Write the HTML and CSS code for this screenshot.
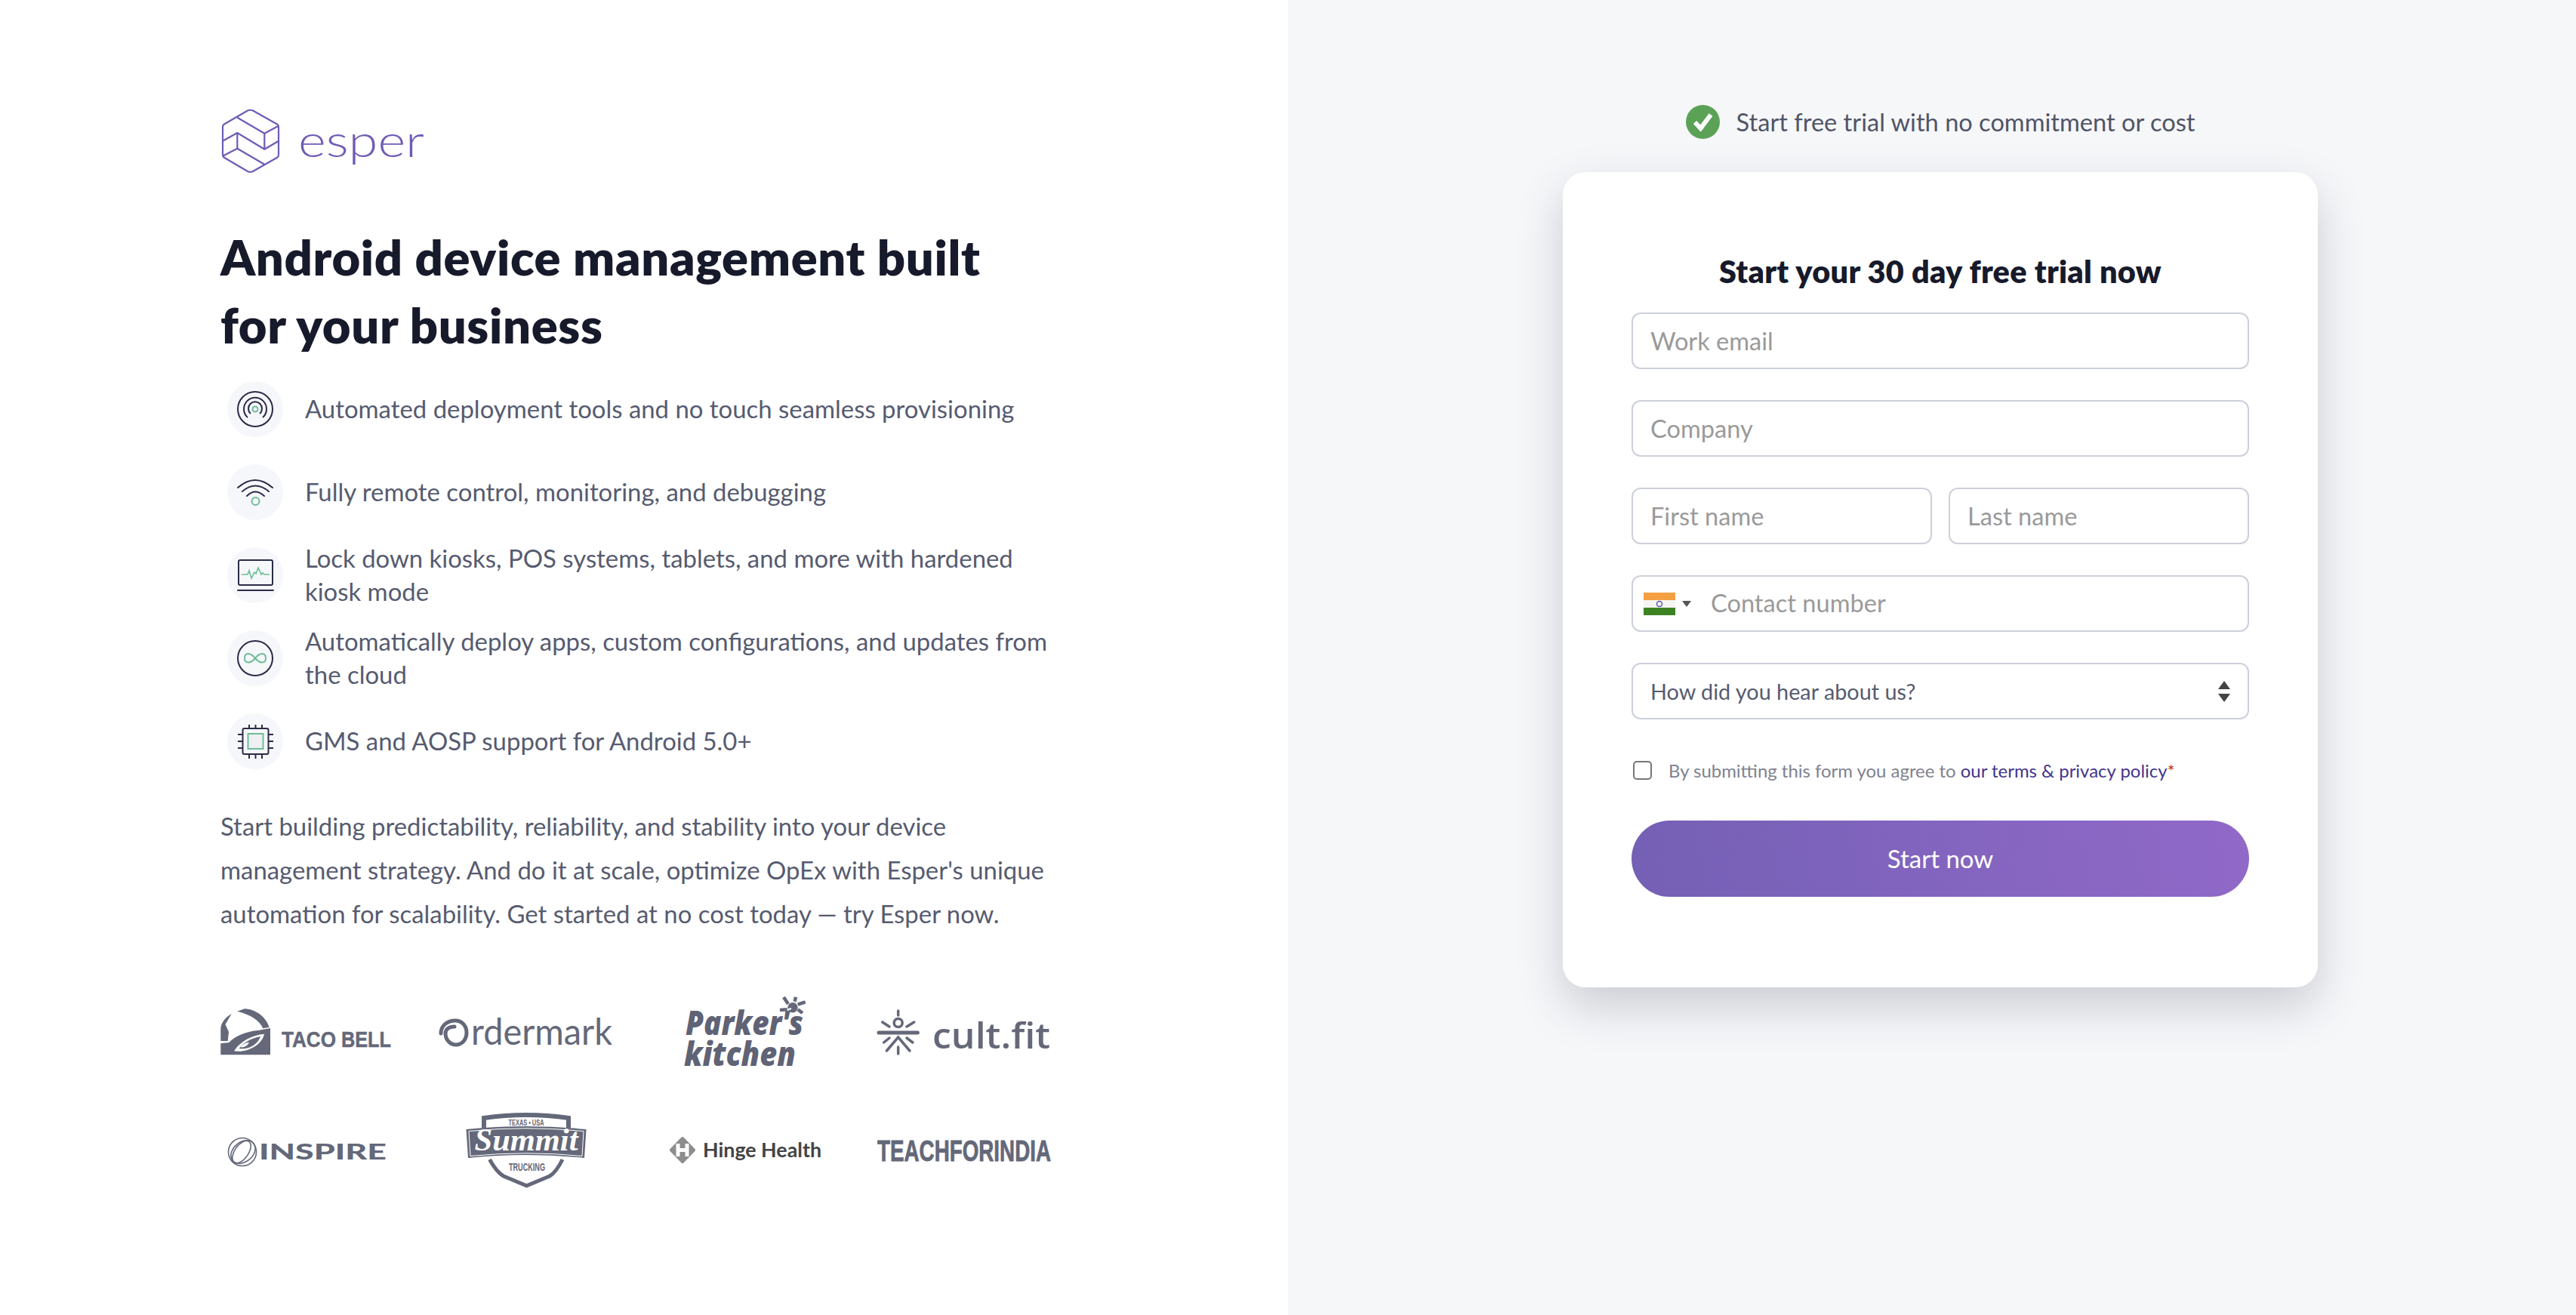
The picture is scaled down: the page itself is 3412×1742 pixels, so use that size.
FILE: index.html
```html
<!DOCTYPE html>
<html lang="en">
<head>
    <meta charset="UTF-8">
    <title>Esper - Start your free trial</title>
    <link rel="stylesheet" href="styles.css">
</head>
<body>
    <div class="page">
        <section class="intro">
            <svg class="logo" width="280" height="86" viewBox="0 0 280 86">
                <g fill="none" stroke="#6f5bb5" stroke-width="2.2" stroke-linejoin="round">
                    <path d="M36 1.500 Q39.700 0 43 1.500 L75 19.500 Q77 20.700 77 23 V60 Q77 62.500 75 63.700 L43 82 Q39.700 83.500 36 82 L5 63.700 Q3 62.500 3 60 V23 Q3 20.700 5 19.500 Z"/>
                    <path d="M22.300 10.700 L58.300 31.700 L77 21.700"/>
                    <path d="M58.300 31.700 V52.700"/>
                    <path d="M3 41.700 L22.300 31 L58.300 52.700 L77 41.700"/>
                    <path d="M22.300 31 V51.700"/>
                    <path d="M3 61.700 L22.300 51.700 L58.300 72.700"/>
                </g>
                <text class="logo-word" x="103" y="63" textLength="167" lengthAdjust="spacingAndGlyphs">esper</text>
            </svg>
            <h1>Android device management built<br>for your business</h1>
            <ul class="features">
                <li>
                    <span class="feature-icon">
                        <svg width="74" height="74" viewBox="0 0 74 74" fill="none" stroke="#2b2b48" stroke-width="2">
                            <circle cx="37" cy="37" r="23"/>
                            <path d="M27 48 A15 15 0 1 1 47 48"/>
                            <path d="M31 43 A9 9 0 1 1 43 43"/>
                            <circle cx="37" cy="37" r="3.500" stroke="#6dbd95"/>
                        </svg>
                    </span>
                    <p>Automated deployment tools and no touch seamless provisioning</p>
                </li>
                <li>
                    <span class="feature-icon">
                        <svg width="74" height="74" viewBox="0 0 74 74" fill="none" stroke="#2b2b48" stroke-width="2" stroke-linecap="round">
                            <path d="M14 31 Q37 11 60 31"/>
                            <path d="M20 36 Q37 21 55 36"/>
                            <path d="M26 42 Q37 31 49 42"/>
                            <circle cx="37.500" cy="49" r="5" stroke="#6dbd95"/>
                        </svg>
                    </span>
                    <p>Fully remote control, monitoring, and debugging</p>
                </li>
                <li>
                    <span class="feature-icon">
                        <svg width="74" height="74" viewBox="0 0 74 74" fill="none" stroke="#2b2b48" stroke-width="2">
                            <rect x="15" y="17" width="45" height="33" rx="2"/>
                            <path d="M14 57 H61" stroke-linecap="round"/>
                            <path d="M19 36 H27 L29 31 L32 41 L36 33 L38 35 L41 27 L45 36 L47 34 L49 36 H56" stroke="#6dbd95" stroke-width="1.600"/>
                        </svg>
                    </span>
                    <p>Lock down kiosks, POS systems, tablets, and more with hardened kiosk mode</p>
                </li>
                <li>
                    <span class="feature-icon">
                        <svg width="74" height="74" viewBox="0 0 74 74" fill="none" stroke="#2b2b48" stroke-width="2">
                            <circle cx="37" cy="37" r="23"/>
                            <path d="M37 37 C33 32 30 31 28 31 C24 31 23 34 23 37 C23 40 24 42.500 28 42.500 C30 42.500 33 41.500 37 37 C41 32 44 31 46 31 C50 31 51 34 51 37 C51 40 50 42.500 46 42.500 C44 42.500 41 41.500 37 37 Z" stroke="#6dbd95"/>
                        </svg>
                    </span>
                    <p>Automatically deploy apps, custom configurations, and updates from the cloud</p>
                </li>
                <li>
                    <span class="feature-icon">
                        <svg width="74" height="74" viewBox="0 0 74 74" fill="none" stroke="#2b2b48" stroke-width="2">
                            <rect x="20.500" y="20" width="34" height="34" rx="2"/>
                            <rect x="27.500" y="27" width="20" height="20" stroke="#6dbd95" fill="#eef0f4"/>
                            <path d="M29 15 V20 M37.500 15 V20 M46 15 V20 M29 54 V60 M37.500 54 V60 M46 54 V60 M14 28 H20 M14 37 H20 M14 46 H20 M55 28 H61 M55 37 H61 M55 46 H61"/>
                        </svg>
                    </span>
                    <p>GMS and AOSP support for Android 5.0+</p>
                </li>
            </ul>
            <p class="pitch">Start building predictability, reliability, and stability into your device management strategy. And do it at scale, optimize OpEx with Esper's unique automation for scalability. Get started at no cost today — try Esper now.</p>
            <div class="clients">
                <!-- taco bell -->
                <svg width="230" height="100" viewBox="0 0 230 100">
                    <path class="mark" d="M14.700 26 C6 31 1 38 0.300 45 V62 L9.700 62 L11 50 L6.500 40 Z"/>
                    <path class="mark" d="M22.300 22.700 L32 19.300 C47 20 60 30 64.700 43.700 L56.300 45.300 C52 35 40 27 22.300 22.700 Z"/>
                    <path class="mark" d="M0.300 65.300 L11.300 64 C20 55 35 49 50 48 L66 45 V80.300 H0.300 Z"/>
                    <path d="M18 75.300 C26 62 43 54 58 52.700 C55 67 36 78 18 75.300 Z" fill="#fff"/>
                    <path class="mark" d="M24.700 72 C30 64 42 58 53 56 C50 66 38 74 24.700 72 Z"/>
                    <path d="M26.300 70.300 C30 66 34 64 38 63.700 C36 68 32 71 26.300 70.300 Z" fill="#fff"/>
                    <text class="tb" x="81" y="70" textLength="72" lengthAdjust="spacingAndGlyphs">TACO</text>
                    <text class="tb" x="160" y="70" textLength="66" lengthAdjust="spacingAndGlyphs">BELL</text>
                </svg>
                <!-- ordermark -->
                <svg width="230" height="100" viewBox="0 0 230 100">
                    <path d="M2 52 C2 41 11 35 21 35 C30 35 36 42 36 51 C36 60 30 67 22 67 C14 67 8 60 8 52 C8 46 13 43 20 43" fill="none" stroke="#646879" stroke-width="5" stroke-linecap="round"/>
                    <text class="om" x="42" y="67" textLength="187" lengthAdjust="spacingAndGlyphs">rdermark</text>
                </svg>
                <!-- parker's kitchen -->
                <svg width="230" height="100" viewBox="0 0 230 100">
                    <text class="pk"><tspan x="36" y="54" textLength="156" lengthAdjust="spacingAndGlyphs">Parker's</tspan> <tspan x="34" y="95" textLength="148" lengthAdjust="spacingAndGlyphs">kitchen</tspan></text>
                    <circle class="mark" cx="178" cy="17.700" r="6.700"/>
                    <path d="M170 21 L176 19" stroke="#fff" stroke-width="2"/>
                    <path d="M166 4 L172 13 M182 3.700 L180.700 9.700 M194.700 10.300 L184.700 13.700 M191 25 L184.700 20.300 M161 21 L170.700 20.300" fill="none" stroke="#646879" stroke-width="4.500"/>
                </svg>
                <!-- cult.fit -->
                <svg width="230" height="100" viewBox="0 0 230 100">
                    <g fill="none" stroke="#646879" stroke-width="3.500" stroke-linecap="round">
                        <circle cx="27.700" cy="38" r="5.500"/>
                        <path d="M27.700 22 V28 M6.700 37 L16 43 M48.800 37 L39 43 M8.600 64 L16 58 M46.900 64 L39 58 M27.700 70 V79 M12.400 75 L27.700 57 L43 75"/>
                        <path d="M2 51 H53.400" stroke-width="5"/>
                    </g>
                    <text class="cf" x="73" y="72" textLength="156" lengthAdjust="spacingAndGlyphs">cult.fit</text>
                </svg>
                <!-- inspire -->
                <svg width="230" height="100" viewBox="0 0 230 100">
                    <g fill="none" stroke="#646879" stroke-width="1.600">
                        <circle cx="29" cy="52" r="18.500"/>
                        <ellipse cx="28" cy="52" rx="9" ry="17" transform="rotate(35 28 52)"/>
                        <ellipse cx="30" cy="52" rx="13" ry="18" transform="rotate(50 30 52)"/>
                    </g>
                    <text class="ins" x="51" y="62" textLength="169" lengthAdjust="spacingAndGlyphs">INSPIRE</text>
                </svg>
                <!-- summit trucking -->
                <svg width="230" height="100" viewBox="0 0 230 100">
                    <path d="M59 20 V7 Q115 -1 171 7 V20" fill="none" stroke="#646879" stroke-width="6"/>
                    <path class="mark" d="M35.500 22 Q115 14 194.500 22 L192 60 Q115 52 38 60 Z"/>
                    <path d="M39 24.500 Q115 17 191 24.500 L189 57.500 Q115 50 41 57.500 Z" fill="none" stroke="#fff" stroke-width="1"/>
                    <path d="M66.500 62 C72 72 78 80 85 84 L115.500 96.700 L146 84 C153 80 158 72 163 62" fill="none" stroke="#646879" stroke-width="5"/>
                    <text class="sm-small" x="115" y="17" text-anchor="middle" textLength="47" lengthAdjust="spacingAndGlyphs">TEXAS • USA</text>
                    <text class="sm" x="115" y="50" text-anchor="middle" textLength="137" lengthAdjust="spacingAndGlyphs">Summit</text>
                    <text class="sm-small sm-low" x="116" y="77" text-anchor="middle" textLength="48" lengthAdjust="spacingAndGlyphs">TRUCKING</text>
                </svg>
                <!-- hinge health -->
                <svg width="230" height="100" viewBox="0 0 230 100">
                    <path d="M32 34 L47 49.500 L32 65 L17 49.500 Z" fill="#8d8d8d" stroke="#8d8d8d" stroke-width="4" stroke-linejoin="round"/>
                    <path d="M26 41 V58 M38 41 V58 M26 49.500 H38" stroke="#fff" stroke-width="5" fill="none"/>
                    <text class="hh" x="59" y="59" textLength="157" lengthAdjust="spacingAndGlyphs">Hinge Health</text>
                </svg>
                <!-- teach for india -->
                <svg width="230" height="100" viewBox="0 0 230 100">
                    <text class="tfi" x="0" y="64" textLength="230" lengthAdjust="spacingAndGlyphs">TEACHFORINDIA</text>
                </svg>
            </div>
        </section>
        <section class="signup">
            <div class="note">
                <svg width="45" height="45" viewBox="0 0 45 45">
                    <circle cx="22.500" cy="22.500" r="22.500" fill="#5ba257"/>
                    <path d="M12 23 L19.500 31 L33 13" fill="none" stroke="#fff" stroke-width="6"/>
                </svg>
                <span>Start free trial with no commitment or cost</span>
            </div>
            <form class="card">
                <h2>Start your 30 day free trial now</h2>
                <input class="field" type="text" placeholder="Work email">
                <input class="field" type="text" placeholder="Company">
                <div class="name-row">
                    <input class="field" type="text" placeholder="First name">
                    <input class="field" type="text" placeholder="Last name">
                </div>
                <div class="phone">
                    <svg class="flag" width="42" height="30" viewBox="0 0 42 30">
                        <rect width="42" height="30" fill="#f5f5f5"/>
                        <rect width="42" height="10" fill="#f4a042"/>
                        <rect y="20" width="42" height="10" fill="#3d8223"/>
                        <circle cx="21" cy="15" r="3.500" fill="none" stroke="#5a5aa8" stroke-width="1.500"/>
                    </svg>
                    <svg width="12" height="8" viewBox="0 0 12 8"><path d="M0 0 H12 L6 8 Z" fill="#555"/></svg>
                    <input type="text" placeholder="Contact number">
                </div>
                <div class="select-wrap">
                    <select class="field">
                        <option>How did you hear about us?</option>
                    </select>
                    <svg class="select-arrows" width="16" height="28" viewBox="0 0 16 28"><path d="M8 0 L16 11 H0 Z M8 28 L0 17 H16 Z" fill="#444"/></svg>
                </div>
                <label class="terms">
                    <input type="checkbox">
                    <span>By submitting this form you agree to <a href="#">our terms &amp; privacy policy</a><i>*</i></span>
                </label>
                <button type="button">Start now</button>
            </form>
        </section>
    </div>
</body>
</html>
```

FILE: styles.css
```css
* { box-sizing: border-box; }
html, body { margin: 0; height: 100%; }
body { font-family: Lato, "Open Sans", sans-serif; color: #565b70; background: #fff; overflow: hidden; }

.page { display: grid; grid-template-columns: 1706px 1706px; height: 1742px; }

/* left column */
.intro { padding: 145px 0 0 292px; }
.logo { display: block; overflow: visible; }
.logo-word { font-family: Lato, sans-serif; font-weight: 300; font-size: 60px; fill: #6f5bb5; }
h1 { margin: 64px 0 0; font-size: 65px; line-height: 90px; letter-spacing: 0.65px; font-weight: 800; color: #171a2b; }

.features { list-style: none; margin: 30px 0 0; padding: 0 0 0 9px; width: 1110px; display: flex; flex-direction: column; gap: 36px; }
.features li { display: flex; align-items: center; gap: 29px; height: 74px; }
.features p { margin: 0; font-size: 32.9px; line-height: 44px; }
.feature-icon { flex: none; width: 74px; height: 74px; border-radius: 50%; background: #f6f7fb; }
.feature-icon svg { display: block; }

.pitch { margin: 47px 0 0; width: 1110px; font-size: 32.9px; line-height: 58px; }

.clients { display: grid; grid-template-columns: repeat(4, 230px); column-gap: 60px; row-gap: 57px; margin-top: 77px; }
.clients svg { display: block; overflow: visible; }
.mark { fill: #646879; }
.tb { font: 700 29px "Liberation Sans", sans-serif; fill: #646879; stroke: #646879; stroke-width: 0.5; }
.om { font: 400 48px Lato, sans-serif; fill: #646879; }
.pk { font: italic 800 45px "Open Sans", sans-serif; fill: #5f6375; }
.cf { font: 600 47px "Open Sans", sans-serif; fill: #646879; }
.ins { font: 900 29px Lato, sans-serif; fill: #646879; }
.sm { font: italic 700 42px "Liberation Serif", serif; fill: #fff; }
.sm-small { font: 700 11px "Liberation Sans Narrow", sans-serif; fill: #646879; }
.sm-low { font-size: 14px; }
.hh { font: 700 27px Lato, sans-serif; fill: #444; }
.tfi { font: 700 39px "Liberation Sans Narrow", sans-serif; fill: #646879; stroke: #646879; stroke-width: 0.8; }

/* right column */
.signup { background: #f6f7f9; padding: 139px 0 0 22px; display: flex; flex-direction: column; align-items: center; }
.note { display: flex; align-items: center; gap: 22px; font-size: 32.6px; color: #505568; margin-bottom: 44px; }
.card { width: 1000px; height: 1080px; background: #fff; border-radius: 30px; padding: 108px 91px 0; box-shadow: 0 25px 60px rgba(50, 55, 80, 0.22); display: flex; flex-direction: column; gap: 41px; }
h2 { margin: -2px 0 -11px; font-size: 41.4px; line-height: 50px; letter-spacing: 0.3px; font-weight: 800; text-align: center; color: #171a2b; }

.field, .phone { width: 100%; height: 75px; border: 2px solid #cdd0db; border-radius: 12px; background: #fff; font-family: inherit; font-size: 32.6px; color: #565b70; }
.field { padding: 0 23px; }
input { outline: none; }
input::placeholder { color: #9a9a9a; opacity: 1; }

.name-row { display: flex; gap: 22px; }
.phone { display: flex; align-items: center; padding-left: 14px; gap: 9px; }
.phone input { flex: 1; border: 0; padding: 0 0 2px 17px; height: 100%; background: none; font: inherit; }
.flag { flex: none; }

.select-wrap { position: relative; }
.select-wrap select { appearance: none; font-size: 28.8px; display: block; }
.select-arrows { position: absolute; right: 25px; top: 24px; }

.terms { display: flex; align-items: center; gap: 22px; margin: 11.5px 0 12px; font-size: 23.95px; color: #80828f; }
.terms input { appearance: none; margin: 0 0 0 2px; width: 25px; height: 25px; border: 2px solid #777; border-radius: 5px; background: #fff; }
.terms a { color: #43358d; text-decoration: none; }
.terms i { color: #c0392b; font-style: normal; }

button { height: 101px; border: 0; border-radius: 51px; background: linear-gradient(80deg, #7460b5, #9169c8); color: #fff; font-family: inherit; font-size: 33px; margin-top: -1px; }
```
